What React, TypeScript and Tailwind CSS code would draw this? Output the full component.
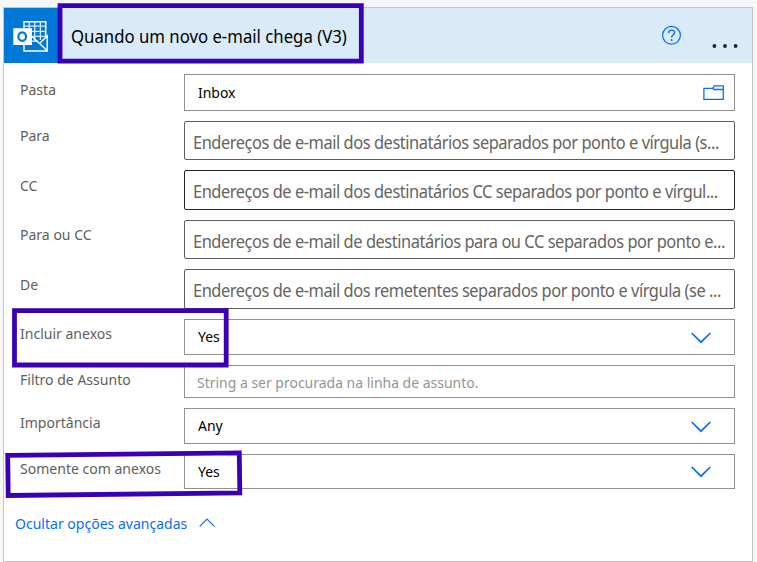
import { ReactNode } from "react";

function Row({ label, labelClass = "pt-1", height, children }: { label: string; labelClass?: string; height: string; children: ReactNode }) {
  return (
    <div className={`flex ${height}`}>
      <div className={`w-[164px] shrink-0 text-[15px] leading-5 whitespace-nowrap text-[#605e5c] ${labelClass}`}>
        <span className="inline-block origin-left scale-x-[0.935]">{label}</span>
      </div>
      {children}
    </div>
  );
}

function ChevronDown() {
  return (
    <svg className="mt-px mr-[23px] h-3 w-5 shrink-0" viewBox="0 0 20 12" fill="none" stroke="#0a6cff" strokeWidth="1.7">
      <path d="M0.7 1 L10 10.2 L19.3 1" />
    </svg>
  );
}

function Select({ value, valueClass = "-mt-px" }: { value: string; valueClass?: string }) {
  return (
    <div className="flex flex-1 items-center justify-between border border-[#919191] bg-white pl-[13px] text-[15px] text-black">
      <span className={`origin-left scale-x-[0.93] ${valueClass}`}>{value}</span>
      <ChevronDown />
    </div>
  );
}

function Recipients({ text, border = "border-[#605e5c]" }: { text: string; border?: string }) {
  return (
    <div className={`flex min-w-0 flex-1 items-center rounded-[2px] border bg-white pl-2 text-[18px] whitespace-nowrap text-[#666462] ${border}`}>
      <span className="origin-left scale-x-[0.912] pt-[3px] tracking-[-0.5px]">{text}</span>
    </div>
  );
}

function OutlookIcon() {
  return (
    <svg className="ml-[9px] h-8 w-9" viewBox="13 19 36 32" fill="none">
      <path d="M24 20.8H45.7V36" stroke="#fff" strokeWidth="1.6" />
      <path d="M24 20V27M24 44V50H47.2V35L39.5 42.5" stroke="#fff" strokeWidth="1.4" />
      <path d="M24 25.2H45M31 30.4H45M31 35.4H45M31 40.2H38M29.2 21V28M34.7 21V41M40.4 21V39" stroke="#d6e9f9" strokeWidth="1.3" />
      <path d="M39.5 42.5L47 49.5M32 35.5L39.5 42.5" stroke="#fff" strokeWidth="1.3" />
      <path d="M13.3 27.2H32V44H13.3Z" fill="#fff" />
      <ellipse cx="22.2" cy="35.6" rx="3.8" ry="4.3" stroke="#0078d7" strokeWidth="2.2" />
    </svg>
  );
}

export default function App() {
  return (
    <div className="relative h-[562px] w-[757px] overflow-hidden bg-[#f7f7f7] pt-[7px] pl-[3px] font-['Noto_Sans',sans-serif]">
      <div className="h-[555px] w-[750px] border border-[#c4c4c4] bg-white">
        <header className="flex h-[55px] bg-[#d9eaf8]">
          <div className="flex w-[55px] items-center bg-[#0078d7]">
            <OutlookIcon />
          </div>
          <h1 className="flex flex-1 items-center pt-px pl-3 text-[18px] whitespace-nowrap text-black">
            <span className="origin-left scale-x-[0.93]">Quando um novo e-mail chega (V3)</span>
          </h1>
          <svg className="mt-[17px] mr-[30px] h-5 w-5" viewBox="0 0 20 20" fill="none" stroke="#0a6cff">
            <circle cx="9.5" cy="10.3" r="8.9" strokeWidth="1.2" />
            <path d="M6.7 8C6.7 4.2 12.5 4.2 12.5 7.7C12.5 10 9.6 9.6 9.6 12.4" strokeWidth="1.4" />
            <circle cx="9.6" cy="15" r="0.95" fill="#0a6cff" stroke="none" />
          </svg>
          <svg className="mt-[36px] mr-[14px] h-1 w-[26px]" viewBox="0 0 26 4" fill="#222">
            <circle cx="2.4" cy="2" r="1.9" />
            <circle cx="13" cy="2" r="1.9" />
            <circle cx="23.6" cy="2" r="1.9" />
          </svg>
        </header>
        <main className="flex flex-col gap-[10px] pt-[11px] pr-[17px] pl-4">
          <Row label="Pasta" height="h-[37px]" labelClass="pt-[5px]">
            <div className="flex flex-1 items-center justify-between border border-[#919191] pl-[13px] text-[15px] text-black">
              <span className="origin-left scale-x-[0.93]">Inbox</span>
              <svg className="mr-[10px] h-4 w-[21px]" viewBox="0 0 21 16" fill="none" stroke="#0a6cff" strokeWidth="1.3">
                <path d="M0.9 3.3H9.5L11.3 0.8H20.3V14.3H0.9ZM9.5 3.3L11 4.5H20" />
              </svg>
            </div>
          </Row>
          <Row label="Para" height="h-[39px]">
            <Recipients text="Endereços de e-mail dos destinatários separados por ponto e vírgula (s..." />
          </Row>
          <Row label="CC" height="h-[40px]" labelClass="pt-[5px]">
            <Recipients text="Endereços de e-mail dos destinatários CC separados por ponto e vírgul..." border="border-[#252423]" />
          </Row>
          <Row label="Para ou CC" height="h-[39px]">
            <Recipients text="Endereços de e-mail de destinatários para ou CC separados por ponto e..." />
          </Row>
          <Row label="De" height="h-[40px]" labelClass="pt-[5px]">
            <Recipients text="Endereços de e-mail dos remetentes separados por ponto e vírgula (se ..." />
          </Row>
          <Row label="Incluir anexos" height="h-[36px]">
            <Select value="Yes" />
          </Row>
          <Row label="Filtro de Assunto" height="h-[33px]">
            <div className="flex flex-1 items-center border border-[#919191] pt-[2px] pl-3 text-[15px] whitespace-nowrap text-[#949494]">
              <span className="origin-left scale-x-[0.931]">String a ser procurada na linha de assunto.</span>
            </div>
          </Row>
          <Row label="Importância" height="h-[36px]">
            <Select value="Any" />
          </Row>
          <Row label="Somente com anexos" height="h-[35px]">
            <Select value="Yes" valueClass="" />
          </Row>
        </main>
        <a className="mt-6 ml-[11px] flex items-center text-[15px] leading-5 text-[#0a6cff]">
          <span className="w-[172px] whitespace-nowrap">
            <span className="inline-block origin-left scale-x-[0.935]">Ocultar opções avançadas</span>
          </span>
          <svg className="-mt-[2px] ml-3 h-[9px] w-4" viewBox="0 0 16 9" fill="none" stroke="#0a6cff" strokeWidth="1.2">
            <path d="M0.7 8.3L8 1L15.3 8.3" />
          </svg>
        </a>
      </div>
      <svg className="pointer-events-none absolute inset-0 h-[562px] w-[757px]" fill="none" stroke="#3c00b4" strokeWidth="4.8">
        <path d="M60 5.6H361.3V61.2H60Z" />
        <path d="M14.5 310.7H226.2V365H14.5Z" />
        <path d="M7.7 455.3L239.3 452.9L239.8 493L8.2 495.5Z" />
      </svg>
    </div>
  );
}
